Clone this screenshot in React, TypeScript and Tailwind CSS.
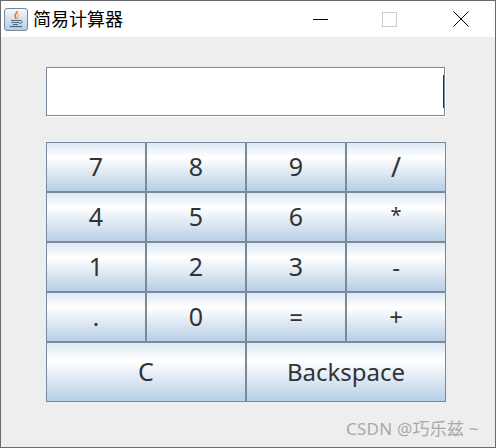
const keys = [
  { label: "7", size: "text-[25px]" },
  { label: "8", size: "text-[25px]" },
  { label: "9", size: "text-[25px]" },
  { label: "/", size: "text-[27px]" },
  { label: "4", size: "text-[25px]" },
  { label: "5", size: "text-[25px]" },
  { label: "6", size: "text-[25px]" },
  { label: "*", size: "text-[20px] pb-[5px]" },
  { label: "1", size: "text-[25px]" },
  { label: "2", size: "text-[25px]" },
  { label: "3", size: "text-[25px]" },
  { label: "-", size: "text-[24px]" },
  { label: ".", size: "text-[24px]" },
  { label: "0", size: "text-[25px]" },
  { label: "=", size: "text-[24px]" },
  { label: "+", size: "text-[24px]" },
];

function JavaIcon() {
  return (
    <div className="w-[24px] h-[23px] rounded-[3px] border border-[#6f8ba3] bg-gradient-to-b from-[#f4f7fa] to-[#b9cbdb] flex items-center justify-center">
      <svg width="18" height="19" viewBox="0 0 18 19" fill="none">
        <path d="M10 1c1 2-2.500 3-2 5 .2 1 .8 1.600 1 3" stroke="#e8772e" strokeWidth="1.600" />
        <path d="M12 4c-1 1-1.500 2-1 4.500" stroke="#f09a4a" strokeWidth="1" />
        <path d="M4 10.500h9M4.500 12.500h8M6 14.500h5" stroke="#44667f" strokeWidth="1.200" />
        <path d="M13 10.500c3 0 2.500 3-.5 3" stroke="#44667f" />
        <path d="M3 16.500h12" stroke="#44667f" strokeWidth="1.200" />
      </svg>
    </div>
  );
}

function CalcButton({ label, className }: { label: string; className: string }) {
  return (
    <button className={`border border-[#7a8a99] bg-gradient-to-b from-[#dde8f3] via-white via-30% to-[#b8cfe5] text-[#333333] flex items-center justify-center ${className}`}>
      {label}
    </button>
  );
}

export default function App() {
  return (
    <div className="w-[496px] h-[448px] bg-[#eeeeee] border border-[#6b6b6b] font-['Noto_Sans','Noto_Sans_CJK_SC',sans-serif] flex flex-col overflow-hidden relative">
      {/* Title bar */}
      <div className="h-[36px] bg-white flex items-center shrink-0">
        <div className="ml-[3px]"><JavaIcon /></div>
        <span className="ml-[5px] text-[18px] text-black">简易计算器</span>
        <div className="ml-auto flex items-center">
          <svg width="16" height="16" viewBox="0 0 16 16" className="mr-[53px]">
            <path d="M0 8.500h15" stroke="#000" />
          </svg>
          <div className="w-[15px] h-[15px] border border-[#cccccc] mr-[56px]" />
          <svg width="16" height="16" viewBox="0 0 16 16" className="mr-[26px]">
            <path d="M.5.500l15 15M15.500.500l-15 15" stroke="#000" />
          </svg>
        </div>
      </div>

      {/* Display */}
      <div className="ml-[45px] mt-[30px] w-[399px] h-[49px] bg-white border border-[#7a8a99] shadow-[1px_1px_0_#ffffff] flex items-center justify-end">
        <div className="w-px h-[33px] bg-[#333333]" />
      </div>

      {/* Keypad */}
      <div className="ml-[45px] mt-[26px] w-[400px] grid grid-cols-4 grid-rows-[repeat(4,50px)_60px] text-[24px]">
        {keys.map((k) => (
          <CalcButton key={k.label} label={k.label} className={k.size} />
        ))}
        <CalcButton label="C" className="col-span-2 text-[25px]" />
        <CalcButton label="Backspace" className="col-span-2" />
      </div>

      <span className="absolute left-[345px] top-[415px] text-[17px] tracking-[0.25px] text-[#a9a9a9]">CSDN @巧乐兹 ~</span>
    </div>
  );
}
